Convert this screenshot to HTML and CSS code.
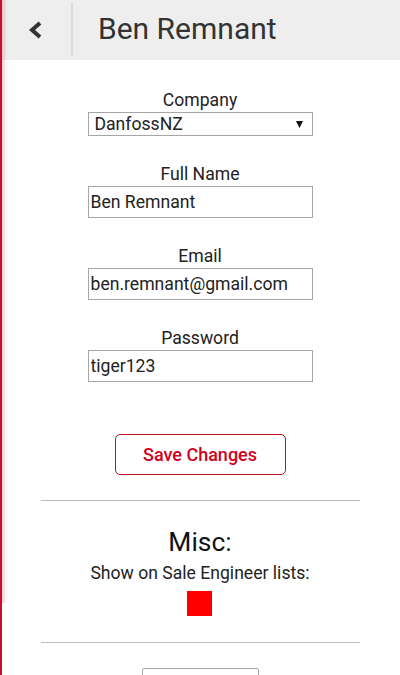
FILE: index.html
```html
<!DOCTYPE html>
<html lang="en">
<head>
<meta charset="utf-8">
<title>Ben Remnant</title>
<link rel="stylesheet" href="styles.css">
</head>
<body>
<div class="app">
  <header class="topbar">
    <button class="back" aria-label="Back">
      <svg width="16" height="18" viewBox="0 0 16 18"><polyline points="12,2 4,9 12,16" fill="none" stroke="#333" stroke-width="4" stroke-linejoin="miter"/></svg>
    </button>
    <span class="divider"></span>
    <h1 class="title">Ben Remnant</h1>
  </header>

  <main class="content">
    <form class="form">
      <div class="field first">
        <label class="label">Company</label>
        <div class="select-wrap">
          <select class="select"><option>DanfossNZ</option></select>
          <svg class="arrow" width="7" height="7" viewBox="0 0 7 7"><polygon points="0,0 7,0 3.5,7" fill="#111"/></svg>
        </div>
      </div>
      <div class="field">
        <label class="label">Full Name</label>
        <input class="input" type="text" value="Ben Remnant">
      </div>
      <div class="field">
        <label class="label">Email</label>
        <input class="input" type="text" value="ben.remnant@gmail.com">
      </div>
      <div class="field">
        <label class="label">Password</label>
        <input class="input" type="text" value="tiger123">
      </div>
      <button type="button" class="save">Save Changes</button>
    </form>

    <hr class="rule">

    <section class="misc">
      <h2 class="misc-title">Misc:</h2>
      <p class="misc-text">Show on Sale Engineer lists:</p>
      <span class="toggle"></span>
    </section>

    <hr class="rule rule2">

    <div class="more"><button type="button" class="more-btn"></button></div>
  </main>
</div>
</body>
</html>
```

FILE: styles.css
```css
html, body {
  margin: 0;
  padding: 0;
}
body {
  font-family: Roboto, "Liberation Sans", Arial, sans-serif;
  color: #222;
  background: #fff;
  overflow: hidden;
}
.app {
  min-height: 675px;
  background:
    linear-gradient(to right, #c8102e 0, #c8102e 2px, rgba(255, 255, 255, 0) 2px) 0 0 / 2px 100% no-repeat,
    linear-gradient(to right, rgba(214, 90, 100, 0.3), rgba(255, 255, 255, 0)) 2px 0 / 5px 603px no-repeat;
}
.topbar {
  height: 60px;
  background:
    linear-gradient(to right, #c8102e 0, #c8102e 2px, rgba(255, 255, 255, 0) 2px) 0 0 / 2px 100% no-repeat,
    linear-gradient(to right, rgba(214, 90, 100, 0.3), rgba(238, 238, 238, 0)) 2px 0 / 5px 100% no-repeat,
    #eeeeee;
  display: flex;
  align-items: stretch;
}
.back {
  width: 71px;
  border: 0;
  padding: 0;
  margin: 0;
  background: transparent;
  display: flex;
  align-items: center;
  justify-content: center;
}
.back svg {
  display: block;
}
.divider {
  width: 2px;
  margin: 2px 0 4px;
  background: #dadada;
}
.title {
  margin: 0 0 0 25px;
  font-weight: 400;
  font-size: 30px;
  color: #333;
  line-height: 58px;
}
.content {
  display: flex;
  flex-direction: column;
  align-items: center;
}
.form {
  width: 225px;
  display: flex;
  flex-direction: column;
  align-items: center;
  padding-top: 30px;
}
.field {
  width: 100%;
  display: flex;
  flex-direction: column;
  align-items: center;
  margin-top: 28px;
}
.field.first {
  margin-top: 0;
}
.label {
  font-size: 17.6px;
  line-height: 20px;
  margin-bottom: 2px;
  color: #222;
}
.select-wrap {
  width: 100%;
  display: grid;
  align-items: center;
}
.select, .select-wrap .arrow {
  grid-area: 1 / 1;
}
.select {
  appearance: none;
  -webkit-appearance: none;
  width: 100%;
  height: 24px;
  box-sizing: border-box;
  border: 1px solid #a6a6a6;
  border-radius: 0;
  background: #fff;
  font-family: Roboto, "Liberation Sans", Arial, sans-serif;
  font-size: 17.6px;
  color: #222;
  padding: 0 0 0 6px;
  line-height: 22px;
}
.select-wrap .arrow {
  justify-self: end;
  margin-right: 10px;
  pointer-events: none;
}
.input {
  width: 100%;
  height: 32px;
  box-sizing: border-box;
  border: 1px solid #a6a6a6;
  border-radius: 0;
  padding: 0 2px;
  font-family: Roboto, "Liberation Sans", Arial, sans-serif;
  font-size: 17.6px;
  color: #222;
  background: #fff;
}
.save {
  margin-top: 52px;
  width: 171px;
  height: 41px;
  border: 1px solid #b8141f;
  border-radius: 5px;
  background: #fff;
  color: #d0021b;
  font-family: Roboto, "Liberation Sans", Arial, sans-serif;
  font-size: 18px;
  font-weight: 500;
  padding: 0;
}
.rule {
  width: 319px;
  border: 0;
  border-top: 1px solid #bdbdbd;
  margin: 25px 0 0;
}
.misc {
  display: flex;
  flex-direction: column;
  align-items: center;
  padding-top: 26px;
}
.misc-title {
  margin: 0;
  font-size: 26.4px;
  font-weight: 400;
  line-height: 31px;
  color: #111;
}
.misc-text {
  margin: 5px 0 0;
  font-size: 17.6px;
  line-height: 20px;
  color: #222;
}
.toggle {
  display: block;
  width: 25px;
  height: 25px;
  margin-top: 8px;
  background: #ff0000;
}
.rule2 {
  margin-top: 26px;
}
.more {
  padding-top: 25px;
}
.more-btn {
  display: block;
  width: 117px;
  height: 32px;
  border: 1px solid #a6a6a6;
  border-radius: 2px;
  background: #fff;
  padding: 0;
}
```
